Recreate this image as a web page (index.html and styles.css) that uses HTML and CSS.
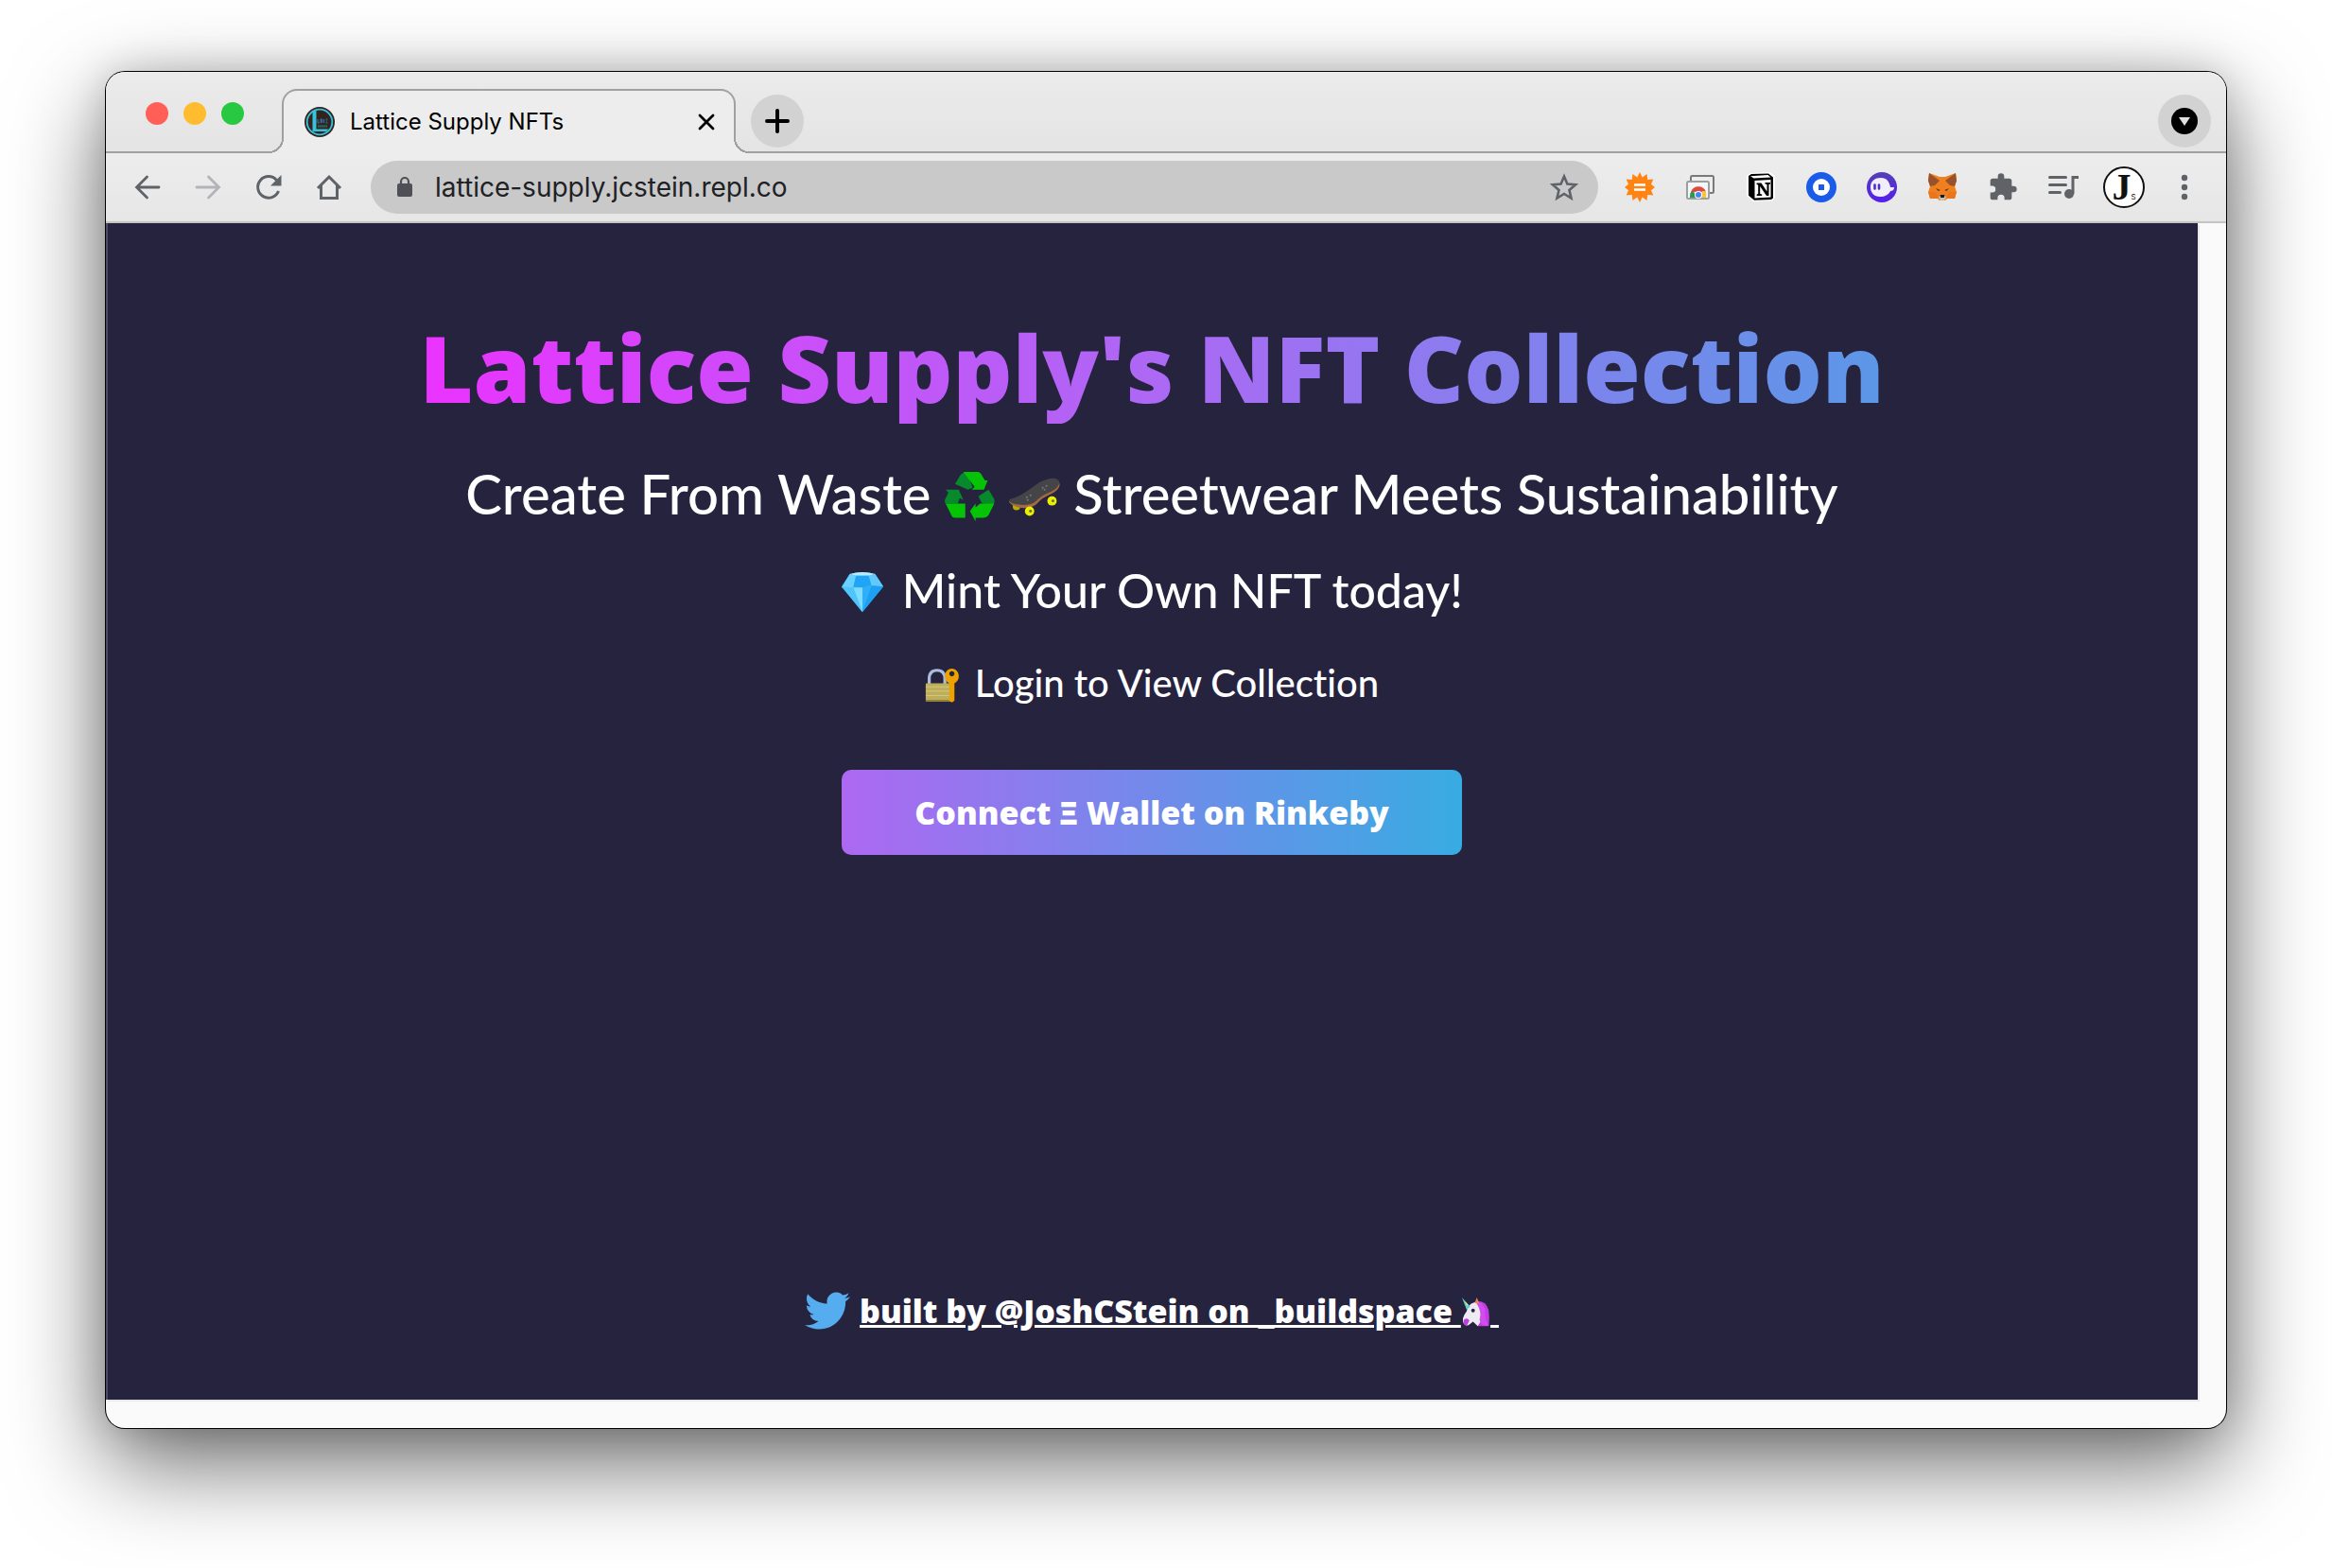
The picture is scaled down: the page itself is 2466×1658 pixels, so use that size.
FILE: index.html
```html
<!DOCTYPE html>
<html lang="en">
<head>
<meta charset="utf-8">
<title>Lattice Supply NFTs</title>
<link rel="stylesheet" href="styles.css">
</head>
<body>
<div class="window">
  <header class="tabstrip">
    <div class="lights">
      <span class="light light-red"></span>
      <span class="light light-amber"></span>
      <span class="light light-green"></span>
    </div>
    <div class="tab">
      <svg class="favicon" viewBox="0 0 32 32" aria-hidden="true"><circle cx="16" cy="16" r="16" fill="#322320"/><circle cx="16" cy="16" r="13.300" fill="none" stroke="#35c2da" stroke-width="1.800"/><path d="M8.500 5.500L12.500 3v20.500h13L23 26H8.500z" fill="#35c2da"/><path d="M14 13v4h1.500M17 17v-4h1.500v4M20.500 13v4M22.500 13h2M22.500 15h1.500M22.500 17h2" stroke="#2f7fb5" fill="none"/><path d="M14 20.500h10.500" stroke="#2c6f6e" stroke-width="2.500" stroke-dasharray="1.500 .6"/></svg>
      <span class="tab-title">Lattice Supply NFTs</span>
      <button class="plain" aria-label="Close tab"><svg width="18" height="18" viewBox="0 0 18 18"><path d="M2 2l14 14M16 2L2 16" stroke="#000" stroke-width="2.800" stroke-linecap="round"/></svg></button>
    </div>
    <button class="round" aria-label="New tab"><svg width="26" height="26" viewBox="0 0 26 26"><path d="M13 2v22M2 13h22" stroke="#000" stroke-width="4" stroke-linecap="round"/></svg></button>
    <button class="round round-end" aria-label="Search tabs"><svg width="28" height="28" viewBox="0 0 28 28"><circle cx="14" cy="14" r="14"/><path d="M8 10h12l-6 9z" fill="#e0e0e0"/></svg></button>
  </header>

  <nav class="toolbar">
    <div class="nav-buttons">
      <button class="plain" aria-label="Back"><svg width="32" height="32" viewBox="0 0 32 32" fill="none" stroke="#5f6368" stroke-width="2.800" stroke-linecap="round"><path d="M28 16H5M15.500 5L4.500 16l11 11"/></svg></button>
      <button class="plain" aria-label="Forward"><svg width="32" height="32" viewBox="0 0 32 32" fill="none" stroke="#b3b4b9" stroke-width="2.800" stroke-linecap="round"><path d="M4 16h23M16.500 5l11 11-11 11"/></svg></button>
      <button class="plain" aria-label="Reload"><svg width="32" height="32" viewBox="0 0 32 32"><path d="M26.500 20A11.300 11.300 0 1 1 24.500 8.500" fill="none" stroke="#5f6368" stroke-width="3"/><path d="M29.500 3v11.500H18z" fill="#5f6368"/></svg></button>
      <button class="plain" aria-label="Home"><svg width="32" height="32" viewBox="0 0 32 32" fill="none" stroke="#5f6368" stroke-width="3"><path d="M4 17L16 5l12 12M7.500 14v13.500h17V14"/></svg></button>
    </div>
    <div class="address">
      <svg width="20" height="24" viewBox="0 0 20 24" aria-hidden="true"><rect x="2" y="8" width="16" height="14" rx="2" fill="#4f5056"/><path d="M6 9V6a4 4 0 0 1 8 0v3" fill="none" stroke="#4f5056" stroke-width="2.200"/></svg>
      <input class="url" type="text" aria-label="Address" value="lattice-supply.jcstein.repl.co">
      <button class="plain" aria-label="Bookmark"><svg width="32" height="32" viewBox="0 0 32 32"><path d="M16 4.500l3.400 8 8.700.8-6.600 5.700 2 8.500L16 23l-7.500 4.500 2-8.500-6.600-5.700 8.700-.8z" fill="none" stroke="#5f6368" stroke-width="2.600"/></svg></button>
    </div>
    <div class="extensions">
      <svg width="32" height="32" viewBox="0 0 32 32"><path d="M16 0l2.700 5.500L23.500 2l.8 6 6-.5L28 12.700l4 3.300-4 3.300 2.300 5.200-6-.5-.8 6-4.800-3.500L16 32l-2.700-5.500L8.500 30l-.8-6-6 .5L4 19.300 0 16l4-3.300L1.700 7.500l6 .5.8-6 4.800 3.500z" fill="#ff8413"/><path d="M10 13.500h12M10 18.500h12" stroke="#fff" stroke-width="2.600"/></svg>
      <svg width="32" height="32" viewBox="0 0 32 32"><rect x="6" y="4" width="24" height="18" rx="1.500" fill="#ededed" stroke="#77797d" stroke-width="2"/><rect x="2" y="10" width="23" height="18" rx="1.500" fill="#f5f6f8" stroke="#9c9ea1" stroke-width="2"/><path d="M5 27v-2a8 8 0 0 1 3-6l4.500 8z" fill="#279c4c"/><path d="M6 21a8.500 8.500 0 0 1 16 0z" fill="#dc4b3e"/><path d="M15 27l3-7h3.500c1 2 1 5 .5 7z" fill="#fbc23c"/><circle cx="14" cy="24" r="4" fill="#fff"/><circle cx="14" cy="24" r="3" fill="#4285f4"/></svg>
      <svg width="32" height="32" viewBox="0 0 32 32"><path d="M1 4l4-3 20-1 6 4v23l-3 3-20 1-7-6z" fill="#fff"/><path d="M3 4l3-2 18-.5 5 4v22l-2 1.500-18 .8-6-5z"/><path d="M5 4.200L23.500 3l3 2.500-18 1z" fill="#fff"/><path d="M9.500 9l17-1v18.500l-17 1z" fill="#fff"/><path d="M11.500 11.500h5l6 9v-7.500l-2-.5v-1.500h5.500v1.500l-1.500.5V25h-2.500l-6.800-10v8l2 .5V25h-5.500v-1.500l1.500-.5V13.500l-1.700-.5z"/></svg>
      <svg width="32" height="32" viewBox="0 0 32 32"><circle cx="16" cy="16" r="16" fill="#1b5bea"/><circle cx="16" cy="16" r="9" fill="#fff"/><rect x="13" y="13" width="6" height="6" rx="0.500" fill="#1b5bea"/></svg>
      <svg width="32" height="32" viewBox="0 0 32 32"><defs><linearGradient id="ghost" x2="0" y2="1"><stop stop-color="#5440b4"/><stop offset="1" stop-color="#551ef0"/></linearGradient></defs><circle cx="16" cy="16" r="16" fill="url(#ghost)"/><path d="M4 16C4 9 9 6 15 6c6 0 9 4 10 10h4c0 3-2 4-4 4-2 4-6 6-11 6C8 26 4 22 4 16z" fill="#f1eefc"/><path d="M8.500 13.500v4M13 13.500v4" stroke="#5030c8" stroke-width="2.600" stroke-linecap="round"/></svg>
      <svg width="32" height="32" viewBox="0 0 32 32"><path d="M2 1l11 4h6l11-4 1 8-2 6 2 6-2 7-7-1-3 3h-6l-3-3-7 1-2-7 2-6-2-6z" fill="#f07f1f"/><path d="M2 1l11 8-5 5-5 1-2-6zM30 1L19 9l5 5 5 1 2-6z" fill="#97512b"/><path d="M1 21l8 0 3 7-9 0zM31 21h-8l-3 7 9 0z" fill="#e8761d"/><path d="M9 17l5 2-2.500 1zM23 17l-5 2 2.500 1z" fill="#5b3a25"/><path d="M12 27l2-3h4l2 3-2 3h-4z" fill="#c9bfb2"/><path d="M13.500 24h5l-.7 3h-3.600z" fill="#1d1a1a"/></svg>
      <svg width="32" height="32" viewBox="0 0 24 24"><path fill="#5f6368" d="M20.500 11H19V7a2 2 0 0 0-2-2h-4V3.500a2.500 2.500 0 0 0-5 0V5H4a2 2 0 0 0-2 2v3.800h1.500a2.700 2.700 0 0 1 0 5.400H2V20a2 2 0 0 0 2 2h3.800v-1.500a2.700 2.700 0 0 1 5.400 0V22H17a2 2 0 0 0 2-2v-4h1.500a2.500 2.500 0 0 0 0-5z"/></svg>
      <svg width="32" height="32" viewBox="0 0 32 32"><path d="M1.500 5.500h17M1.500 13.500h17M1.500 21.500h11" stroke="#5f6368" stroke-width="3" stroke-linecap="round"/><path d="M32 5.500h-6V23" fill="none" stroke="#5f6368" stroke-width="3"/><circle cx="22" cy="23" r="5" fill="#5f6368"/></svg>
      <span class="avatar">J<small>S</small></span>
      <button class="plain" aria-label="Menu"><svg width="32" height="32" viewBox="0 0 32 32" fill="#5f6368"><circle cx="16" cy="6" r="3.200"/><circle cx="16" cy="16" r="3.200"/><circle cx="16" cy="26" r="3.200"/></svg></button>
    </div>
  </nav>

  <div class="viewport">
    <main class="page">
      <h1 class="title">Lattice Supply's NFT Collection</h1>
      <p class="tagline">Create From Waste
        <svg class="emoji" viewBox="0 0 54 54" role="img" aria-label="recycling"><path d="M11 13l6-10q3-3 7-3l6 17-5 2z" fill="#068a2b"/><path d="M20 0h16q3 1 4 4l3 5h3l-4 10H29l3-3z" fill="#05c405"/><path d="M1 19h14l5 11-4-2-2 6H1q-2-3 0-6l3-6z" fill="#068a2b"/><path d="M1 34h21v15H11q-3 0-4-3z" fill="#05c405"/><path d="M36 26l11-7 6 10q1 3-1 6l-12-1z" fill="#068a2b"/><path d="M38 34h15l-6 12q-2 3-6 3h-8v4l-6-11 6-8v4z" fill="#05c405"/></svg>
        <svg class="emoji" viewBox="0 0 54 54" role="img" aria-label="skateboard"><circle cx="8" cy="37" r="4" fill="#b5b000"/><path d="M0 32q0-2 5-3c12-4 20-12 28-17 8-5 16-6 20-2 3 4 0 9-5 12-8 4-13 6-18 12-4 4-12 6-20 4Q2 36 0 32z" fill="#a56a42"/><path d="M0 31q0-2 5-3c12-4 20-12 28-17 8-4 16-6 20-2 2 4-1 8-6 11-8 4-13 6-18 11-4 4-11 5-19 4Q2 34 0 31z" fill="#454547"/><path d="M19 27h.1M23 25h.1M20 30h.1M36 17h.1M40 15h.1M38 19h.1" stroke="#777" stroke-width="2" stroke-linecap="round"/><circle cx="22" cy="42" r="5" fill="#eaf000"/><circle cx="23" cy="42" r="1.500" fill="#665"/><circle cx="46" cy="31" r="5" fill="#eaf000"/><circle cx="47" cy="31" r="1.500" fill="#665"/></svg>
        Streetwear Meets Sustainability</p>
      <p class="mint"><svg class="emoji" viewBox="0 0 48 48" role="img" aria-label="gem"><path d="M10 3Q24-1 38 3l9 14-23 28L1 17z" fill="#30aef8"/><path d="M10 3Q24-1 38 3l-7 2H17z" fill="#b8eaff"/><path d="M10 3l7 2-3 13H1z" fill="#69d1ff"/><path d="M17 5h14l3 10-10 3-10-1z" fill="#1fa5f5"/><path d="M38 3l9 14-13-1-3-11z" fill="#63c9fb"/><path d="M1 17l13 1 10 27z" fill="#50c5fc"/><path d="M14 18h10v27z" fill="#7ddcff"/><path d="M34 16l13 1-23 28z" fill="#1ba0f3"/></svg> Mint Your Own NFT today!</p>
      <p class="login"><svg class="emoji" viewBox="0 0 40 40" role="img" aria-label="locked with key"><path d="M5 19v-6q0-10 9-10t9 10v6" fill="none" stroke="#a9bddd" stroke-width="3.500"/><rect x="1" y="18" width="29" height="21" rx="1" fill="#bdae5c"/><path d="M1 22h29M1 27h29M1 32h29" stroke="#d7cb83"/><path d="M1 37h29v2H1z" fill="#8d7d37"/><path fill-rule="evenodd" d="M31 1c5 0 8 4 8 9 0 4-2 6-5 8v20l-3 2-3-2V18c-3-2-5-4-5-8 0-5 3-9 8-9zm0 3a3 3 0 1 0 .1 0z" fill="#eda200"/></svg> Login to View Collection</p>
      <button class="connect">Connect Ξ Wallet on Rinkeby</button>
      <footer class="footer">
        <svg class="bird" viewBox="0 0 24 24" role="img" aria-label="Twitter"><path fill="#55acee" d="M23.950 4.570a10 10 0 0 1-2.820.77 4.960 4.960 0 0 0 2.160-2.720c-.95.560-2 .96-3.130 1.180a4.920 4.920 0 0 0-8.380 4.480C7.690 8.100 4.070 6.130 1.640 3.160a4.820 4.820 0 0 0-.67 2.480c0 1.710.87 3.210 2.190 4.100a4.900 4.900 0 0 1-2.230-.62v.06a4.920 4.920 0 0 0 3.950 4.830 5 5 0 0 1-2.210.08 4.940 4.940 0 0 0 4.600 3.420A9.870 9.870 0 0 1 0 19.540a13.990 13.990 0 0 0 7.560 2.210c9.050 0 13.990-7.500 13.990-13.980 0-.21 0-.42-.02-.63a9.940 9.940 0 0 0 2.460-2.550z"/></svg>
        <a class="credit" href="#">built by @JoshCStein on _buildspace <svg class="emoji" viewBox="0 0 32 32" role="img" aria-label="unicorn"><path d="M15 4q12-2 15 10 1 8 0 17H18l-2-9z" fill="#c13fe0"/><path d="M2 24q0-4 4-9 1-8 9-10l7 2q5 6 3 14-4 5-7 10l-5-5-5 4q-6 1-6-6z" fill="#eeeaf2"/><path d="M16 5q10 0 10 12 0 8 4 13-8 2-10-6 3-9-4-19z" fill="#d14df0"/><path d="M3 24q4-3 6 1l-3 6q-4-2-3-7z" fill="#c13fe0"/><path d="M1 0l9 10-4 3z" fill="#59cfe0"/><path d="M4 4l4 4-2 1z" fill="#f6dc4a"/><path d="M15 6l2-6 3 7z" fill="#e78a55"/><circle cx="13" cy="14" r="2" fill="#34203b"/></svg>&nbsp;</a>
      </footer>
    </main>
  </div>
</div>
</body>
</html>
```
FILE: styles.css
```css
* { box-sizing: border-box; }

body {
  margin: 0;
  padding: 76px 112px 148px;
  min-height: 100vh;
  display: flex;
  background: #fff;
  font-family: Inter, "Liberation Sans", sans-serif;
}

button { font: inherit; border: 0; padding: 0; cursor: pointer; }
svg { display: block; flex: none; }

.window {
  flex: 1;
  min-width: 0;
  display: flex;
  flex-direction: column;
  border-radius: 20px;
  overflow: hidden;
  background: #fafafa;
  box-shadow: 0 0 0 1px #000, 0 36px 100px rgba(0, 0, 0, 0.6), 0 0 40px rgba(0, 0, 0, 0.16);
}

.tabstrip {
  height: 86px;
  display: flex;
  align-items: flex-end;
  background: linear-gradient(#ebebeb, #e4e4e4);
  box-shadow: inset 0 -2px #a0a0a0;
}

.lights {
  display: flex;
  gap: 16px;
  padding: 0 40px 30px 42px;
}

.light { width: 24px; height: 24px; border-radius: 50%; }
.light-red { background: #ff5f57; }
.light-amber { background: #febc2e; }
.light-green { background: #28c840; }

.tab {
  position: relative;
  width: 480px;
  height: 68px;
  display: flex;
  align-items: center;
  padding: 0 20px 0 22px;
  border: 2px solid #a0a0a0;
  border-bottom: 0;
  border-radius: 16px 16px 0 0;
  background: #ededed;
}

/* flared feet where the tab meets the strip */
.tab::before,
.tab::after {
  content: "";
  position: absolute;
  bottom: 0;
  width: 16px;
  height: 16px;
}
.tab::before {
  left: -16px;
  background: radial-gradient(circle at 0 0, transparent 14px, #a0a0a0 14px, #a0a0a0 16px, #ededed 16px);
}
.tab::after {
  right: -16px;
  background: radial-gradient(circle at 100% 0, transparent 14px, #a0a0a0 14px, #a0a0a0 16px, #ededed 16px);
}

.favicon { width: 32px; height: 32px; }

.tab-title {
  flex: 1;
  margin-left: 16px;
  font-size: 24px;
  line-height: 32px;
  color: #000;
}

.plain { background: none; display: flex; }

.round {
  width: 56px;
  height: 56px;
  margin: 0 16px 6px;
  border-radius: 50%;
  display: flex;
  align-items: center;
  justify-content: center;
  background: #d2d2d2;
}
.round-end { margin-left: auto; }

.toolbar {
  height: 74px;
  display: flex;
  align-items: center;
  padding: 0 28px;
  background: linear-gradient(#ededed, #e6e6e6);
  border-bottom: 2px solid #c4c4c4;
}

.nav-buttons { display: flex; gap: 32px; }

.address {
  flex: 1;
  height: 56px;
  margin: 0 28px;
  padding: 0 20px 0 26px;
  display: flex;
  align-items: center;
  border-radius: 28px;
  background: #c9c9c9;
}

.url {
  flex: 1;
  min-width: 0;
  margin-left: 22px;
  padding: 0;
  border: 0;
  background: none;
  font: 28px/36px Inter, "Liberation Sans", sans-serif;
  color: #202124;
}

.extensions { display: flex; align-items: center; gap: 32px; }

.avatar {
  width: 44px;
  height: 44px;
  margin: 0 -6px;
  border: 2px solid #111;
  border-radius: 50%;
  display: flex;
  align-items: flex-end;
  justify-content: center;
  background: #fff;
  font: bold 40px/40px "Liberation Serif", serif;
  color: #111;
}
.avatar small { font: 8px/20px Inter, sans-serif; }

.viewport {
  flex: 1;
  display: flex;
  padding: 0 30px 30px 0;
}

.page {
  flex: 1;
  display: flex;
  flex-direction: column;
  align-items: center;
  padding: 92px 0 70px;
  background: #26233f;
  box-shadow: inset 2px 0 #4d4b62, 2px 2px #e9e9ec;
  color: #fff;
  font-family: Lato, "Open Sans", sans-serif;
  font-weight: 500;
  font-variant-ligatures: none;
}

.title, .tagline, .mint, .login { margin: 0; text-align: center; }

.title, .connect, .credit {
  font-family: "Open Sans", Lato, sans-serif;
  font-weight: 800;
}

.title {
  width: 100%;
  font-size: 98px;
  line-height: 120px;
  background: linear-gradient(to right, #ea33ff 15%, #ad68f4 50%, #38ace2 100%);
  -webkit-background-clip: text;
  background-clip: text;
  color: transparent;
}

.tagline { margin-top: 34px; font-size: 58px; line-height: 80px; }
.mint { margin-top: 28px; font-size: 50px; line-height: 68px; }
.login { margin-top: 36px; font-size: 40px; line-height: 56px; }

.emoji {
  display: inline;
  width: 0.92em;
  height: 0.92em;
  vertical-align: -0.14em;
}
.mint .emoji, .login .emoji { margin-right: 6px; }

.connect {
  margin-top: 64px;
  width: 656px;
  height: 90px;
  border-radius: 10px;
  background: linear-gradient(to right, #ad68f2, #38ace2);
  color: #fff;
  font-size: 34px;
}

.footer {
  margin-top: auto;
  display: flex;
  align-items: center;
  gap: 10px;
}

.bird { width: 48px; height: 48px; }

.credit {
  color: #fff;
  font-size: 34px;
  line-height: 48px;
  text-decoration: underline 3px;
  text-underline-offset: 2px;
}
```
